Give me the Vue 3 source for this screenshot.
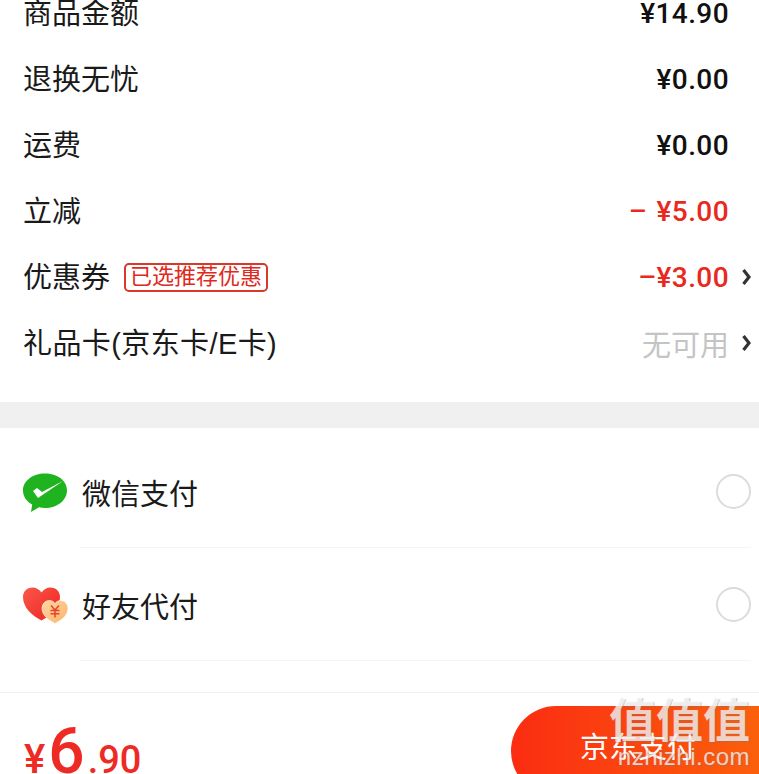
<template>
  <div class="page">
    <section class="fees">
      <div v-for="row in fees" :key="row.label" class="fee-row">
        <div class="fee-label" :class="{ wide: row.wide }">
          <span>{{ row.label }}</span>
          <span v-if="row.tag" class="tag">{{ row.tag }}</span>
        </div>
        <div class="fee-value" :class="row.type">
          <span>{{ row.value }}</span>
        </div>
        <svg v-if="row.arrow" class="arrow" viewBox="0 0 9 16" width="9" height="16">
          <path d="M1.500 1 L7 8 L1.500 15" fill="none" stroke="#333" stroke-width="3.200" />
        </svg>
      </div>
    </section>

    <div class="band"></div>

    <section class="pay">
      <div class="pay-row">
        <svg class="pay-icon" viewBox="0 0 46 42" width="46" height="42">
          <path d="M23 2.500C10.600 2.500 1 10 1 19.500c0 6 3.600 11 9.200 14L9 41l8-4.700c1.900.4 3.900.7 6 .7 12.400 0 22-7.800 22-17.500S35.400 2.500 23 2.500z" fill="#1fb31f" />
          <path d="M11 20l4-3 5 4 21-11-25 17z" fill="#fff" />
        </svg>
        <span class="pay-name">微信支付</span>
        <span class="radio"></span>
      </div>
      <div class="pay-row">
        <svg class="pay-icon" viewBox="0 0 46 42" width="46" height="42">
          <defs>
            <linearGradient id="heartRed" x1="0" y1="0" x2="1" y2="1">
              <stop offset="0" stop-color="#f9584c" />
              <stop offset="1" stop-color="#ee221e" />
            </linearGradient>
            <linearGradient id="heartGold" x1="0" y1="0" x2="1" y2="1">
              <stop offset="0" stop-color="#fdd6a0" />
              <stop offset="1" stop-color="#fbb46a" />
            </linearGradient>
          </defs>
          <path d="M19.500 36.500C9 31 1 23 1 13 1 7.500 5 3.500 10.500 3.500c3.800 0 7 2 9 5 2-3 5.200-5 9-5C34 3.500 38 7.500 38 13c0 10-8 18-18.500 23.500z" fill="url(#heartRed)" />
          <path d="M33 39.500C26 36 20 31 20 24.500c0-4.700 3.300-8 7.300-8 2.400 0 4.400 1.100 5.700 3 1.300-1.900 3.300-3 5.700-3 4 0 7.300 3.300 7.300 8C46 31 40 36 33 39.500z" fill="url(#heartGold)" stroke="#fff" stroke-width=".6" />
          <path d="M29 21.500l4 4.500 4-4.500M33 26v7.500M28.500 26.500h9M28.500 29.800h9" fill="none" stroke="#e8402c" stroke-width="1.500" />
        </svg>
        <span class="pay-name">好友代付</span>
        <span class="radio"></span>
      </div>
    </section>

    <footer class="bottom">
      <div class="price">
        <span class="yen">¥</span><span class="big">6</span><span class="cents">.90</span>
      </div>
      <div class="submit">京东支付</div>
    </footer>

    <div class="watermark">
      <div class="wm-logo">值值值</div>
      <div class="wm-url">nzhizhi.com</div>
    </div>
  </div>
</template>

<script setup>
const fees = [
  { label: '商品金额', value: '¥14.90' },
  { label: '退换无忧', value: '¥0.00' },
  { label: '运费', value: '¥0.00' },
  { label: '立减', value: '– ¥5.00', type: 'red' },
  { label: '优惠券', tag: '已选推荐优惠', value: '–¥3.00', type: 'red', arrow: true },
  { label: '礼品卡(京东卡/E卡)', value: '无可用', type: 'muted', arrow: true, wide: true }
];
</script>

<style>
html, body {
  margin: 0;
  background: #fff;
  overflow: hidden;
}
</style>

<style scoped>
.page {
  position: relative;
  width: 759px;
  height: 774px;
  overflow: hidden;
  font-family: "Liberation Sans", "Noto Sans CJK SC", sans-serif;
  color: #1a1a1a;
}

.fees {
  margin-top: -20px;
  padding-bottom: 26px;
}

.fee-row {
  display: flex;
  align-items: center;
  height: 66px;
  padding: 0 30px 0 23px;
  position: relative;
}

.fee-label {
  flex: 1;
  display: flex;
  align-items: center;
  font-size: 29px;
  line-height: 40px;
  padding-top: 1px;
}

.fee-label.wide {
  letter-spacing: 0.4px;
}

.tag {
  margin-left: 14px;
  padding: 0 4px;
  height: 29px;
  box-sizing: border-box;
  border: 2px solid #d9392b;
  border-radius: 5px;
  color: #e0291c;
  font-size: 22px;
  line-height: 24px;
}

.fee-value {
  font-family: Roboto, "Noto Sans CJK SC", sans-serif;
  font-size: 28px;
  font-weight: 500;
  letter-spacing: 0.4px;
  color: #111;
}

.fee-value.red {
  color: #e8291c;
  word-spacing: 2px;
}

.fee-value.muted {
  color: #c4c4c4;
  font-size: 29px;
  font-weight: 400;
  letter-spacing: 0;
}

.arrow {
  position: absolute;
  right: 8px;
  top: 25px;
}

.band {
  height: 26px;
  background: #f0f0f0;
}

.pay {
  padding-top: 7px;
}

.pay-row {
  display: flex;
  align-items: center;
  height: 113px;
  padding: 0 8px 0 22px;
  position: relative;
}

.pay-row::after {
  content: "";
  position: absolute;
  left: 80px;
  right: 8px;
  bottom: 0;
  height: 1px;
  background: #f4f4f4;
}

.pay-icon {
  flex: none;
}

.pay-name {
  flex: 1;
  margin-left: 14px;
  font-size: 29px;
}

.radio {
  width: 35px;
  height: 35px;
  box-sizing: border-box;
  border: 2px solid #dcdcdc;
  border-radius: 50%;
}

.bottom {
  margin-top: 31px;
  height: 82px;
  border-top: 1px solid #efefef;
  position: relative;
}

.price {
  padding: 29px 0 0 24px;
  color: #ee2a24;
  font-family: Roboto, sans-serif;
  font-weight: 500;
  white-space: nowrap;
  line-height: 60px;
}

.yen {
  font-size: 40px;
}

.big {
  font-size: 64px;
  margin: 0 -1px 0 3px;
}

.cents {
  font-size: 38px;
  margin-left: 4px;
}

.submit {
  position: absolute;
  left: 511px;
  top: 13px;
  width: 300px;
  height: 90px;
  border-radius: 45px;
  background: linear-gradient(90deg, #fb2c12, #fb6a0a);
  color: #fff;
  font-size: 29px;
  line-height: 84px;
  padding-left: 69px;
  box-sizing: border-box;
}

.watermark {
  position: absolute;
  right: 9px;
  bottom: -6px;
  height: 92px;
  width: 150px;
  pointer-events: none;
  color: rgba(255, 255, 255, 0.72);
  text-shadow: 1px 1px 1px rgba(120, 120, 120, 0.45);
  font-family: "Noto Sans CJK SC", sans-serif;
}

.wm-logo {
  font-size: 47px;
  font-weight: 700;
  line-height: 58px;
  white-space: nowrap;
  text-align: right;
}

.wm-url {
  margin-top: -3px;
  font-family: "Liberation Sans", sans-serif;
  font-size: 24px;
  line-height: 28px;
  letter-spacing: 0.5px;
  text-align: right;
  white-space: nowrap;
}
</style>
